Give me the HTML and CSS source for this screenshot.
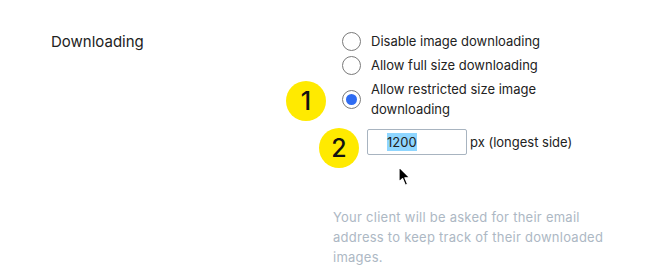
FILE: index.html
```html
<!DOCTYPE html>
<html lang="en">
<head>
    <meta charset="UTF-8">
    <title>Downloading settings</title>
    <link rel="stylesheet" href="styles.css">
</head>
<body>
    <div class="setting">
        <div class="setting-label">Downloading</div>
        <div class="setting-body">
            <div class="option">
                <span class="radio"></span>
                <span class="option-text">Disable image downloading</span>
            </div>
            <div class="option">
                <span class="radio"></span>
                <span class="option-text">Allow full size downloading</span>
            </div>
            <div class="option">
                <span class="radio checked"></span>
                <span class="option-text">Allow restricted size image downloading</span>
            </div>
            <div class="size-row">
                <div class="size-input"><span class="selected">1200</span></div>
                <span class="size-unit">px (longest side)</span>
            </div>
            <p class="help">Your client will be asked for their email address to keep track of their downloaded images.</p>
        </div>
    </div>

    <div class="badge badge-one">1</div>
    <div class="badge badge-two">2</div>

    <svg class="cursor" width="14" height="22" viewBox="0 0 14 22">
        <path d="M1 1 L1 16 L4.5 12.6 L7.3 19.2 L9.6 18.2 L6.9 11.8 L11.8 11.8 Z" fill="#000" stroke="#fff" stroke-width="1.2" stroke-linejoin="round"/>
    </svg>
</body>
</html>
```

FILE: styles.css
```css
body {
    margin: 0;
    font-family: "Inter", "Noto Sans", sans-serif;
    color: #222;
    background: #fff;
    position: relative;
    width: 670px;
    height: 280px;
    overflow: hidden;
}
.setting {
    display: flex;
    padding: 31px 0 0 51px;
}
.setting-label {
    width: 282px;
    font-size: 15px;
    line-height: 22px;
}
.setting-body {
    width: 280px;
}
.option {
    display: flex;
    align-items: center;
    gap: 10px;
    padding-left: 9px;
    margin-bottom: 4px;
    font-size: 13px;
    line-height: 20px;
}
.option-text {
    width: 190px;
}
.radio {
    flex: none;
    width: 17px;
    height: 17px;
    border: 1px solid #7a7a7a;
    border-radius: 50%;
    background: #fff;
    display: flex;
    align-items: center;
    justify-content: center;
}
.radio.checked::after {
    content: "";
    width: 11px;
    height: 11px;
    border-radius: 50%;
    background: #2f6cf2;
}
.size-row {
    display: flex;
    align-items: center;
    gap: 3px;
    margin: 10px 0 0 34px;
    font-size: 13px;
}
.size-input {
    box-sizing: border-box;
    width: 100px;
    height: 26px;
    border: 1px solid #a8b4c0;
    border-radius: 2px;
    padding-left: 19px;
    line-height: 24px;
}
.selected {
    background: #8fd6ff;
    padding: 1px 0;
}
.help {
    margin: 52px 0 0;
    width: 275px;
    font-size: 13px;
    line-height: 20px;
    letter-spacing: 0.25px;
    color: #adb8c4;
}
.badge {
    position: absolute;
    width: 40px;
    height: 40px;
    border-radius: 50%;
    background: #ffea00;
    color: #111;
    font-size: 25px;
    font-weight: 500;
    display: flex;
    align-items: center;
    justify-content: center;
}
.badge-one {
    left: 286px;
    top: 81px;
}
.badge-two {
    left: 319px;
    top: 128px;
}
.cursor {
    position: absolute;
    left: 398px;
    top: 166px;
}
```
